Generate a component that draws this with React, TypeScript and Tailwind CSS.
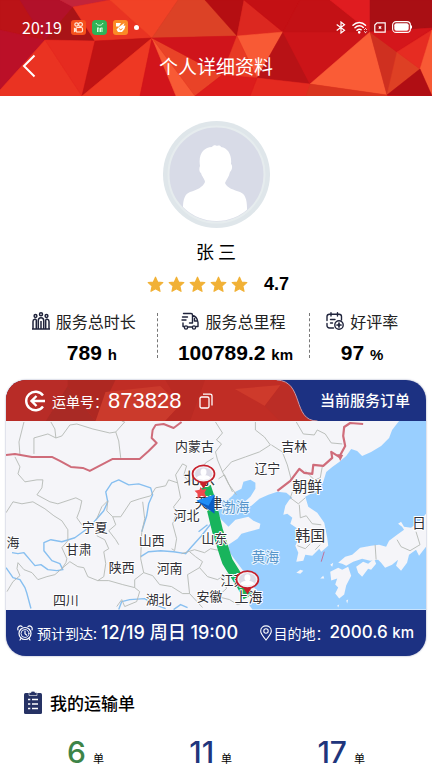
import React from 'react';

const facets: [string, string][] = [
  ['0,0 35,0 45,40 0,30', '#bb1317'],
  ['0,30 45,40 0,90', '#bb1028'],
  ['20,0 60,0 73,7 45,40', '#b2112a'],
  ['45,40 73,7 95,41', '#a91417'],
  ['60,0 110,0 73,7', '#c3243a'],
  ['73,7 110,0 152,38 95,41', '#e93322'],
  ['110,0 178,0 152,38', '#f14226'],
  ['205,0 216,0 237,36 152,38 178,0', '#dc4226'],
  ['0,90 45,40 82,96 0,96', '#ea3322'],
  ['45,40 95,41 82,96', '#e62b20'],
  ['95,41 152,38 82,96', '#c01314'],
  ['82,96 152,38 140,96', '#ee3823'],
  ['140,96 152,38 176,96', '#d2151b'],
  ['152,38 195,96 176,96', '#f85a35'],
  ['152,38 222,75 195,96', '#e94327'],
  ['152,38 237,36 222,75', '#d0141b'],
  ['205,0 244,0 237,36', '#b50e12'],
  ['244,0 283,32 237,36', '#dc2820'],
  ['244,0 300,0 283,32', '#c41014'],
  ['237,36 283,32 257,78', '#f85a35'],
  ['237,36 257,78 222,75', '#e83a24'],
  ['257,78 283,32 310,84', '#b81216'],
  ['283,32 370,32 310,84', '#cc1418'],
  ['300,0 330,0 370,32 283,32', '#c31115'],
  ['330,0 370,0 370,32', '#e01c20'],
  ['370,0 432,0 432,28 370,32', '#a90f14'],
  ['370,32 387,95 310,84', '#fa5c36'],
  ['370,32 397,52 387,95', '#cf3020'],
  ['370,32 432,28 397,52', '#d4161b'],
  ['397,52 420,69 387,95', '#de4024'],
  ['397,52 432,30 420,69', '#e62c22'],
  ['420,69 432,30 432,96', '#f85a35'],
  ['387,95 420,69 432,96', '#b00e14'],
  ['257,78 310,84 306,96 250,96', '#e42a20'],
  ['310,84 387,95 387,96 306,96', '#d8341f'],
  ['222,75 257,78 250,96 195,96', '#dc1c1c'],
];

const places: [string, number, number, number][] = [
  ['内蒙古', 195, 451, 13],
  ['吉林', 295, 451, 13],
  ['辽宁', 268, 473, 13],
  ['朝鲜', 308, 492, 15],
  ['北京', 200, 484, 16],
  ['天津', 209, 508, 14],
  ['河北', 187, 520, 13],
  ['宁夏', 95, 532, 13],
  ['山西', 152, 545, 13],
  ['山东', 215, 543, 13],
  ['韩国', 311, 541, 15],
  ['日', 420, 528, 14],
  ['甘肃', 79, 554, 13],
  ['陕西', 122, 572, 13],
  ['河南', 170, 573, 13],
  ['江苏', 234, 585, 13],
  ['上海', 249, 602, 14],
  ['安徽', 210, 601, 13],
  ['湖北', 159, 604, 13],
  ['四川', 66, 605, 13],
  ['海', 13, 547, 13],
];

const provinces = [
  'M24 422 19 442 20 455M34 454V438L48 434 56 438 62 436 70 425 77 424 93 429 110 433 116 432 119 441 121 458M51 422 55 429 56 438M116 432 125 422 122 421',
  'M15 457 20 467 18 474 25 482 37 480 43 480 42 488 37 495 50 502 58 504 76 498 82 501 80 510 77 518 82 525',
  'M6 513 13 502 22 504 33 502 45 509 54 516 62 521 68 530 68 541 62 548 67 559 66 563 62 569 55 575 47 577 38 580 32 573 24 570 18 563 17 569 20 576 13 582 7 592',
  'M62 569 70 562 78 567 84 568 88 577 98 581 104 577 106 564 104 552 109 549 105 540 97 536',
  'M97 519 102 507 108 501 107 511 113 517 121 517 131 502 140 499 151 496 156 488 166 486 169 480 178 483 176 475 183 464 187 466 184 476 190 482 200 474 206 463 214 458M113 517 116 525 109 531 116 540 119 545',
  'M178 483 181 498 174 507 177 514 173 524 177 539 175 551 172 549',
  'M143 502 145 519 142 533 141 559 144 573 135 580 135 588 123 585 109 581 98 581M135 588 140 592 137 602 125 607 122 600 117 607M144 573 153 576 160 585 172 587 183 594 190 594 188 575 200 568 203 562 196 557 190 552',
  'M182 554 195 550 205 553 211 549 221 551 230 548M200 568 208 577 218 580 228 574M190 594 203 608M224 577 227 589 218 597 230 600 238 605 249 602M231 552 226 558 236 566',
  'M216 422 223 433 217 440 222 444 216 452 218 460 223 472 232 462 246 457 260 452 271 445 265 437 256 430 256 422M297 422 304 434 315 435 318 430 326 434 332 443 343 444M272 445 283 452 288 465 292 480M223 472 229 484 237 495M219 479 225 475 233 492',
  'M296 483 291 498 299 504 306 498M323 467 321 478 315 480 306 471M300 505 301 518 307 516 313 524 322 525M316 550 321 545M298 546 306 549 311 544M376 545 377 560M398 540 402 547 411 551 421 545 417 532',
];

const land = '#f5f5f9';
const sea = '#99cfff';

function MapPin({ x, y }: { x: number; y: number }) {
  return (
    <g transform={`translate(${x} ${y})`}>
      <path d="M-5 7 0 15 5 7Z" fill="#c7202b" />
      <ellipse cx="0" cy="0" rx="11" ry="8.500" fill="#f4f1f5" stroke="#c7202b" strokeWidth="1.700" />
      <ellipse cx="0" cy="0" rx="8.600" ry="6.500" fill="#dcdbe6" />
      <ellipse cx="0" cy="-1.800" rx="3" ry="3.600" fill="#fff" />
      <path d="M-7 4C-5 1-2 2 0 1 2 2 5 1 7 4 4 7-4 7-7 4Z" fill="#fff" />
    </g>
  );
}

function RouteMap() {
  return (
    <svg
      viewBox="6 421 421 189"
      preserveAspectRatio="xMidYMid slice"
      className="block w-full bg-[#f5f5f9]"
      role="img"
      aria-label="运输路线"
    >
      <path
        fill={sea}
        d="M427 421H400L393 430 390 438 382 446 372 452 363 456 358 451 352 449 347 456 340 462 333 467 327 472 324 482 317 491 306 497 309 507 318 513 325 523 328 538 329 546 322 552 320 549 313 556 306 555 304 561 297 562 299 553 296 546 300 537 297 528 291 524 293 518 288 514 284 515 286 506 290 500 293 498 287 493 278 492 269 495 260 499 252 506 245 508 243 504 251 497 256 489 256 483 251 480 244 482 242 489 236 492 233 496 226 502 219 501 215 507 219 515 222 520 229 527 236 520 249 517 254 521 261 524 260 529 249 532 242 534 238 539 229 545 229 551 234 558 243 570 252 578 249 584 257 590 259 596 250 601 250 606 253 610H427Z"
      />
      <g fill={land}>
        <path d="M331 572 339 568 343 570 349 567 352 576 347 586 345 595 340 599 336 594 339 588 336 585 338 579 332 581Z" />
        <path d="M357 567 364 562 369 564 375 559 377 564 372 570 369 569 363 577 359 573Z" />
        <path d="M339 563 346 557 353 555 361 548 372 546 380 545 387 547 390 541 398 535 405 530 403 527 399 524 402 522 405 527 412 528 420 522 427 514V547L420 556 417 550 410 555 408 563 402 571 397 566 399 560 393 565 386 568 382 563 379 560 371 561 363 559 354 562 347 566 343 564Z" />
        <path d="M297 573 301 570 304 571 301 574Z" />
        <path d="M321 579 324 576 325 579ZM331 565 334 563 333 567ZM347 601 349 600 348 604ZM338 606 340 605 339 608Z" />
      </g>
      <path d="M322 562 325 552" stroke="#c0709a" strokeWidth="1" />
      <g fill="none" stroke="#87bff0" strokeWidth="1.400" strokeLinejoin="round">
        <path d="M12 553 18 554 24 553 29 559 35 566 41 565 48 570 57 571 63 570 60 564 52 561 44 551 44 543 51 540 62 542 75 538 86 530 92 525 97 519 104 511 108 502 106 492 112 483 119 480 129 485 139 484 151 488 153 495 149 504 147 516 142 532" />
        <path d="M141 557 149 552 161 551 174 552 186 554 192 547 202 536 213 522 219 516" />
        <path d="M6 568 13 578 20 580 25 588 27 594 31 609" />
        <path d="M119 610 122 602 130 600 145 599 155 605 166 609M174 610 181 605 188 608" />
        <path d="M199 532 208 525" />
      </g>
      <g fill="none" stroke="#b4b8b4" strokeWidth="0.900" strokeLinejoin="round">
        {provinces.map((d) => (
          <path key={d} d={d} />
        ))}
      </g>
      <path
        d="M6 455 15 454 32 457 52 457 60 461 71 467 83 468 90 471 113 459 140 459 149 451 157 443 152 438 153 430 156 425 164 424 174 428 182 422"
        fill="none"
        stroke="#cf6c7a"
        strokeWidth="2"
        strokeLinejoin="round"
      />
      <path
        d="M278 491 291 481 300 469 305 473 313 474 314 465 324 466 333 458 332 452 340 457 346 446 344 436 345 427 351 423 364 424"
        fill="none"
        stroke="#cf6c7a"
        strokeWidth="2.200"
        strokeLinejoin="round"
      />
      <path d="M338 454 341 461 344 455Z" fill="#cf6c7a" />
      <path
        d="M206 487 211 502 218 531C221 539 224 551 228 562L243 586 249 597"
        fill="none"
        stroke="#18b45c"
        strokeWidth="11"
        strokeLinejoin="round"
      />
      <g
        fill="#303036"
        textAnchor="middle"
        stroke="#fff"
        strokeWidth="2"
        paintOrder="stroke"
        strokeLinejoin="round"
        className="font-['Noto_Sans_CJK_SC',sans-serif]"
      >
        {places.map(([name, x, y, size]) => (
          <text key={name} x={x} y={y} fontSize={size}>
            {name}
          </text>
        ))}
        <g fill="#5795cb" stroke="#eaf5ff">
          <text x="236" y="512" fontSize="14">渤海</text>
          <text x="266" y="562" fontSize="14">黄海</text>
        </g>
      </g>
      <path d="M197 501 215 495 215 514Z" fill="#0b5cc4" />
      <path d="M197 501 215 495 209 506Z" fill="#1f8df5" />
      <path d="M201 487 203 490 207 489 205 493 207 498 202 496 198 499 198 494 195 491 200 490Z" fill="#f0484c" />
      <MapPin x={204} y={474} />
      <MapPin x={248} y={580} />
    </svg>
  );
}

function StatusBar() {
  return (
    <div className="flex h-7 items-center pr-5 pl-[22px]">
      <span className="text-base leading-7">20:19</span>
      <div className="ml-[9px] flex items-center gap-[6px]">
        <svg viewBox="0 0 15 15" className="size-[15px]">
          <rect width="15" height="15" rx="3" fill="#f5501c" />
          <g fill="none" stroke="#ffe9da" strokeWidth="1.200">
            <circle cx="5.500" cy="4.500" r="1.700" />
            <circle cx="9.500" cy="4.500" r="1.900" />
            <rect x="5" y="7.500" width="6.500" height="4.500" rx="1.200" />
            <path d="M3.500 8.500 5 9.500V10.500L3.500 11.500Z" />
          </g>
        </svg>
        <svg viewBox="0 0 15 15" className="size-[15px]">
          <rect width="15" height="15" rx="4" fill="#2fb457" />
          <path d="M4 3C5 6 10 6 11 3M5 8H7V12M8.500 12V8H10.500M5.500 8V12M10 8V12" fill="none" stroke="#d8ffe0" strokeWidth="1" />
        </svg>
        <svg viewBox="0 0 15 15" className="size-[15px]">
          <rect width="15" height="15" rx="3" fill="#fb8a26" />
          <path d="M3 3H8L6 6.500H3ZM8 5.500 11.500 3 10.500 6 12.500 5.500 11.500 9 9 12H5L3.500 9.500 5.500 7.500Z" fill="#fff" />
          <path d="M6.500 8.500 7.500 10 9.500 8.500" fill="none" stroke="#fb8a26" strokeWidth="1" />
        </svg>
        <span className="size-[5px] rounded-full bg-white" />
      </div>
      <div className="ml-auto flex items-center gap-[6px]">
        <svg viewBox="0 0 10 13" className="h-[13px] w-[10px]" fill="none" stroke="#fff" strokeWidth="1.200">
          <path d="M.7 3.500 8.500 9.300 5 12V1L8.500 3.700.7 9.500" />
        </svg>
        <svg viewBox="0 0 16 13" className="h-[13px] w-4" fill="none" stroke="#fff" strokeWidth="1.500" strokeLinecap="round">
          <path d="M1 4.200C4.500.5 10 .5 13.500 4.200M3 6.800C5.500 4.200 9 4.200 11.300 6.500M5 9.300C6.500 8 8 8 9 8.700" />
          <circle cx="7.200" cy="11.300" r=".6" fill="#fff" />
          <path d="M12.500 8.500 13.500 7.500 14.500 8.500M12.500 10.700 13.500 11.700 14.500 10.700" strokeWidth="1" />
        </svg>
        <svg viewBox="0 0 12 11" className="h-[11px] w-3" fill="none" stroke="#fff" strokeWidth="1.200">
          <path d="M3 .8H11.200V10.200H.8V3Z" />
          <path d="M4.800 4.300 7.200 6.700M7.200 4.300 4.800 6.700" />
        </svg>
        <svg viewBox="0 0 20 12" className="h-3 w-5">
          <rect x=".6" y=".6" width="17.800" height="10.800" rx="3.500" fill="none" stroke="#fff" strokeWidth="1.100" />
          <rect x="2.300" y="2.300" width="14.400" height="7.400" rx="2" fill="#fff" />
          <path d="M19.500 4.500V7.500" stroke="#fff" />
        </svg>
      </div>
    </div>
  );
}

function Avatar() {
  return (
    <svg viewBox="0 0 107 107" className="size-[107px]" role="img" aria-label="头像">
      <defs>
        <clipPath id="face">
          <circle cx="53.500" cy="53.500" r="46.500" />
        </clipPath>
      </defs>
      <circle cx="53.500" cy="53.500" r="53.500" fill="#dfe6ea" />
      <circle cx="53.500" cy="53.500" r="48" fill="#d8dbe7" stroke="#e6ecee" strokeWidth="2" />
      <g clipPath="url(#face)" fill="#fff">
        <path d="M37 45C35 33 41 26 49 26 50 24 53 24 54 25 56 24 58 25 58 26 65 27 69 34 68 43 70 45 69 49 67 51 66 56 63 59 62 62 64 67 71 69 77 71 82 73 84 78 84 87V107H20V87C20 78 22 73 27 71 34 69 40 66 42 61 42 58 39 56 38 52 36 51 36 47 37 45Z" />
      </g>
    </svg>
  );
}

function Star() {
  return (
    <svg viewBox="0 0 17 17" className="size-[17px]" fill="#f1b136">
      <path
        d="M8.500 1.200 10.600 6 15.800 6.600 11.900 10.100 13 15.300 8.500 12.700 4 15.300 5.100 10.100 1.200 6.600 6.400 6Z"
        stroke="#f1b136"
        strokeWidth="1.200"
        strokeLinejoin="round"
      />
    </svg>
  );
}

function PeopleIcon() {
  return (
    <svg viewBox="0 0 18 18" className="size-[18px]" fill="none" stroke="#20243c" strokeWidth="1.500">
      <circle cx="9" cy="2.300" r="1.500" />
      <circle cx="3.500" cy="4" r="1.400" />
      <circle cx="14.500" cy="4" r="1.400" />
      <path d="M6.300 17V8.500C6.300 4.800 11.700 4.800 11.700 8.500V17M9 9V17M1 17V9.500C1 6.800 4.300 6.500 4.300 8.500V17M17 17V9.500C17 6.800 13.700 6.500 13.700 8.500V17M0 17H18" />
    </svg>
  );
}

function TruckIcon() {
  return (
    <svg viewBox="0 0 18 18" className="size-[18px]" fill="none" stroke="#20243c" strokeWidth="1.400" strokeLinecap="round" strokeLinejoin="round">
      <path d="M2.500 1.500H10C11 1.500 11.500 2 11.500 3V11H8.500M11.500 3.500C14.500 4 16.500 7 17 10.500V14.500H15.500M11 15H7M1.500 5H6.500M1 8H5M2 11V14.500H3M13.500 6.500V9H16" />
      <circle cx="5" cy="15.500" r="1.600" />
      <circle cx="13" cy="15.500" r="1.600" />
    </svg>
  );
}

function RatingIcon() {
  return (
    <svg viewBox="0 0 18 18" className="size-[18px]" fill="none" stroke="#20243c" strokeWidth="1.400" strokeLinecap="round">
      <path d="M7.500 16H3.500C2 16 1 15 1 13.500V11.500M1 8.500V4.500C1 3 2 2.300 3.500 2.300H13C14.500 2.300 15.500 3 15.500 4.500V8M5 .7V4M11.500 .7V4M4.500 7.500H9M4.500 11H6.500" />
      <circle cx="13" cy="13" r="4.200" />
      <path d="M13 11V15M11 13H15" strokeWidth="1.700" />
    </svg>
  );
}

function Stat({ icon, label, value, unit, className, valueClass }: { icon: React.ReactNode; label: string; value: string; unit: string; className: string; valueClass: string }) {
  return (
    <div className={`flex flex-col items-center ${className}`}>
      <dt className="flex items-center gap-[6px] text-base leading-6 text-[#222]">
        {icon}
        {label}
      </dt>
      <dd className={`mt-[6px] font-['Liberation_Sans',sans-serif] text-[21px] leading-7 font-bold text-black ${valueClass}`}>
        {value} <span className="text-[15px]">{unit}</span>
      </dd>
    </div>
  );
}

function Divider() {
  return <div className="mt-1 h-[45px] border-l border-dashed border-[#777]" />;
}

function OrderCard() {
  return (
    <section className="mx-[6px] mt-[11px] overflow-hidden rounded-[20px] bg-[#1c3182] text-white shadow-[0_0_2px_#8d93b5]">
      <div className="relative flex h-[41px] items-center pr-4 pl-[18px]">
        <svg viewBox="0 0 422 41" preserveAspectRatio="none" className="absolute inset-0 size-full" aria-hidden="true">
          <clipPath id="tab">
            <path d="M0 0H272C300 1 287 41 313 41H0Z" />
          </clipPath>
          <g clipPath="url(#tab)">
            <rect width="422" height="41" fill="#c02d25" />
            <path d="M0 0H90L62 6 40 41H0Z" fill="#b82c27" />
            <path d="M62 6 90 41H40Z" fill="#a92a25" />
            <path d="M62 0H110L90 41 62 6Z" fill="#ae2822" />
            <path d="M100 12 155 6 175 25 160 41H90Z" fill="#cb3a2c" />
            <path d="M160 0H200L185 41H160L175 25Z" fill="#b92a23" />
            <path d="M230 9 276 5 260 26Z" fill="#ce3a2b" />
            <path d="M276 5 260 26 275 41H316V0Z" fill="#bb2d26" />
          </g>
          <path d="M272 0C300 1 287 41 313 41" fill="none" stroke="#c59aa9" />
        </svg>
        <div className="relative flex w-full items-center">
          <svg viewBox="0 0 22 22" className="size-[22px]" fill="none" stroke="#fff" strokeWidth="2.400">
            <path d="M19 5.500A9.300 9.300 0 1 0 19 16.500M21 11H8M12.500 6 7.500 11 12.500 16" />
          </svg>
          <span className="ml-[6px] text-sm">运单号：</span>
          <span className="pt-px font-['Liberation_Sans',sans-serif] text-[22px] leading-7">873828</span>
          <button type="button" aria-label="复制运单号" className="ml-[18px]">
            <svg viewBox="0 0 14 16" className="h-4 w-[14px]" fill="none" stroke="#fff" strokeWidth="1.300">
              <rect x="1" y="4" width="9" height="11" rx="1.500" />
              <path d="M4 1.200H11C12.300 1.200 13 2 13 3V12.500" />
            </svg>
          </button>
          <h2 className="ml-auto text-[15px] font-medium">当前服务订单</h2>
        </div>
      </div>
      <RouteMap />
      <div className="flex h-[46px] items-center justify-between pr-3 pl-[11px]">
        <div className="flex items-center">
          <svg viewBox="0 0 16 16" className="size-4" fill="none" stroke="#fff" strokeWidth="1.200" strokeLinecap="round">
            <circle cx="8" cy="8.500" r="6" />
            <circle cx="8" cy="8.500" r="4" strokeWidth=".9" />
            <path d="M8 6V8.700L9.500 10M1 5C0 2 3 0 5 1.500M15 5C16 2 13 0 11 1.500M4 13.500 3 15M12 13.500 13 15" />
          </svg>
          <span className="ml-1 text-sm">预计到达:</span>
          <span className="ml-1 font-['Inter','Noto_Sans_CJK_SC',sans-serif] text-lg leading-7 font-medium">12/19 周日 19:00</span>
        </div>
        <div className="flex items-center">
          <svg viewBox="0 0 12 16" className="h-4 w-3" fill="none" stroke="#fff" strokeWidth="1.100">
            <path d="M6 15C3 11 .7 9 .7 6 .7 -.8 11.300 -.8 11.300 6 11.300 9 9 11 6 15Z" />
            <circle cx="6" cy="6" r="2.200" />
          </svg>
          <span className="ml-px text-sm">目的地：</span>
          <span className="font-['Inter',sans-serif] text-[17px] leading-7 font-medium">
            2000.6 <span className="text-[15px]">km</span>
          </span>
        </div>
      </div>
    </section>
  );
}

function OrderCount({ value, color }: { value: string; color: string }) {
  return (
    <li className="flex items-baseline gap-[7px]">
      <span className={`font-['Inter',sans-serif] text-[30px] leading-8 font-medium ${color}`}>{value}</span>
      <span className="text-[11px] leading-8 text-black">单</span>
    </li>
  );
}

export default function App() {
  return (
    <div className="min-h-screen bg-white font-['Noto_Sans_CJK_SC',sans-serif]">
      <header className="relative overflow-hidden bg-[#d2141a] pt-[13px] pb-[5px] text-white">
        <svg viewBox="0 0 432 96" preserveAspectRatio="none" className="absolute inset-0 size-full" aria-hidden="true">
          {facets.map(([points, fill]) => (
            <polygon key={points} points={points} fill={fill} stroke={fill} strokeWidth=".5" />
          ))}
        </svg>
        <div className="relative">
          <StatusBar />
          <div className="grid h-[50px] grid-cols-[1fr_auto_1fr] items-center">
            <button type="button" aria-label="返回" className="ml-[22px] w-[14px]">
              <svg viewBox="0 0 14 24" className="h-6 w-[14px]" fill="none" stroke="#fff" strokeWidth="2">
                <path d="M12.500 1.500 2 12 12.500 22.500" />
              </svg>
            </button>
            <h1 className="text-[19px] leading-7">个人详细资料</h1>
          </div>
        </div>
      </header>

      <main>
        <section className="flex flex-col items-center pt-[25px]">
          <Avatar />
          <p className="mt-[9px] text-lg leading-7 text-black">张 三</p>
          <div className="mt-[5px] flex items-center pl-1">
            <div className="flex gap-1" role="img" aria-label="4.7 星">
              <Star />
              <Star />
              <Star />
              <Star />
              <Star />
            </div>
            <span className="ml-4 font-['Liberation_Sans',sans-serif] text-lg leading-7 font-bold">4.7</span>
          </div>
        </section>

        <dl className="mt-[11px] flex">
          <Stat className="w-[157px] grow pl-[11px]" valueClass="pl-4" icon={<PeopleIcon />} label="服务总时长" value="789" unit="h" />
          <Divider />
          <Stat className="w-[152px] grow" valueClass="pl-1" icon={<TruckIcon />} label="服务总里程" value="100789.2" unit="km" />
          <Divider />
          <Stat className="w-[122px] grow pr-[18px]" valueClass="" icon={<RatingIcon />} label="好评率" value="97" unit="%" />
        </dl>

        <OrderCard />

        <section className="pt-[33px]">
          <h2 className="flex items-center gap-2 pl-6 text-[17px] leading-7 font-medium text-black">
            <svg viewBox="0 0 18 23" className="h-[23px] w-[18px]">
              <rect y="2" width="18" height="21" rx="1.500" fill="#263264" />
              <path d="M5 4.500V1.500H7C7 -.3 11 -.3 11 1.500H13V4.500Z" fill="#263264" stroke="#fff" strokeWidth=".6" />
              <path d="M4 8.500H6.300M8 8.500H14M4 13H6.300M8 13H14M4 17.500H6.300M8 17.500H14" stroke="#fff" strokeWidth="1.500" />
            </svg>
            我的运输单
          </h2>
          <ul className="mt-[19px] flex justify-between px-[67px]">
            <OrderCount value="6" color="text-[#3d8448]" />
            <OrderCount value="11" color="text-[#20357c]" />
            <OrderCount value="17" color="text-[#20357c]" />
          </ul>
        </section>
      </main>
    </div>
  );
}
